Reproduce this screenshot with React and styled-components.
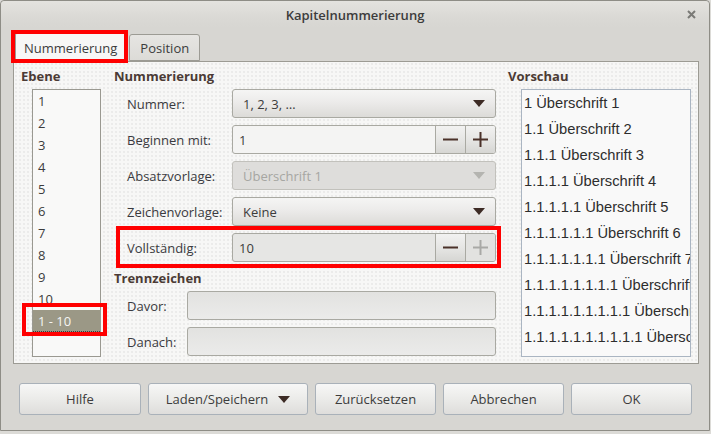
import styled, { createGlobalStyle, css } from "styled-components";

const GlobalStyle = createGlobalStyle`
  html, body {
    margin: 0;
    padding: 0;
    background: #dcdbd7;
  }
  body {
    font-family: "Open Sans", "DejaVu Sans", sans-serif;
    font-size: 13px;
    color: #3c3c3c;
  }
  * { box-sizing: border-box; }
`;

const redMark = css`
  &::after {
    content: "";
    position: absolute;
    border: 4px solid #ff0000;
    pointer-events: none;
  }
`;

const Window = styled.div`
  width: 710px;
  height: 431px;
  border: 1px solid #8e8d86;
  border-radius: 4px 4px 0 0;
  background: #d7d6d2;
  display: flex;
  flex-direction: column;
`;

const TitleBar = styled.div`
  height: 27px;
  display: grid;
  grid-template-columns: 1fr auto 1fr;
  align-items: center;
  background: linear-gradient(#e4e3df, #dad9d5 60%, #d7d6d2);
  border-radius: 4px 4px 0 0;
`;

const Title = styled.div`
  grid-column: 2;
  font-weight: 600;
  font-size: 13px;
  color: #3c3c3c;
`;

const CloseButton = styled.div`
  justify-self: end;
  margin-right: 13px;
  display: flex;
`;

const Body = styled.div`
  flex: 1;
  padding: 0 10px 0 12px;
  display: flex;
  flex-direction: column;
`;

const TabRow = styled.div`
  height: 33px;
  display: flex;
  align-items: flex-end;
  gap: 3px;
  padding-left: 2px;
`;

const Tab = styled.div`
  position: relative;
  height: ${(p) => (p.$active ? "30px" : "27px")};
  margin-bottom: ${(p) => (p.$active ? "-1px" : "0")};
  padding: 0 ${(p) => (p.$active ? 8 : 10)}px;
  display: flex;
  align-items: center;
  border: 1px solid #9c9b94;
  border-bottom: ${(p) => (p.$active ? "none" : "1px solid #9c9b94")};
  border-radius: 3px 3px 0 0;
  background: ${(p) => (p.$active ? "#f7f7f6" : "linear-gradient(#e6e5e2, #dcdbd7)")};
  z-index: ${(p) => (p.$active ? 1 : 0)};
  color: #3c3c3c;
  ${(p) =>
    p.$marked &&
    css`
      ${redMark}
      &::after {
        left: -5px;
        right: -3px;
        top: -3px;
        bottom: -1px;
      }
    `}
`;

const Panel = styled.div`
  height: 303px;
  border: 1px solid #9c9b94;
  background-color: #f7f7f6;
  background-image: radial-gradient(#ebebea 0.7px, transparent 0.8px);
  background-size: 4px 4px;
  padding: 5px 7px 6px 7px;
  display: grid;
  grid-template-columns: 81px 382px 183px;
  column-gap: 12px;
`;

const Column = styled.div`
  display: flex;
  flex-direction: column;
`;

const Heading = styled.div`
  height: 18px;
  line-height: 18px;
  font-weight: 700;
  color: #4b3b35;
  margin-top: ${(p) => p.$top || 0}px;
  margin-bottom: 4px;
`;

const LevelList = styled.div`
  margin-left: 11px;
  width: 69px;
  height: 268px;
  border: 1px solid #9a9991;
  background: #f9f9f8;
`;

const LevelItem = styled.div`
  position: relative;
  height: 22px;
  line-height: 22px;
  padding-left: 5px;
  color: ${(p) => (p.$selected ? "#f5f5f3" : "#3c3c3c")};
  background: ${(p) => (p.$selected ? "#9b9886" : "transparent")};
  border-bottom: ${(p) => (p.$selected ? "1px dotted #3c3c3c" : "none")};
  ${(p) =>
    p.$selected &&
    css`
      ${redMark}
      &::after {
        left: -11px;
        right: -7px;
        top: -7px;
        bottom: -5px;
      }
    `}
`;

const FieldList = styled.div`
  display: flex;
  flex-direction: column;
  gap: 7px;
`;

const FieldRow = styled.div`
  position: relative;
  display: grid;
  grid-template-columns: ${(p) => p.$labelWidth}px 1fr;
  align-items: center;
  padding-left: 13px;
  height: 29px;
  ${(p) =>
    p.$marked &&
    css`
      ${redMark}
      &::after {
        left: 2px;
        right: -5px;
        top: -7px;
        bottom: -6px;
      }
    `}
`;

const Label = styled.div`
  color: #3a3a40;
`;

const controlBase = css`
  height: 29px;
  border: 1px solid #a9a9a2;
  border-radius: 3px;
`;

const Select = styled.div`
  ${controlBase}
  display: flex;
  align-items: center;
  justify-content: space-between;
  padding: 0 10px 0 10px;
  color: ${(p) => (p.$disabled ? "#a6a6a2" : "#3c3c3c")};
  background: ${(p) =>
    p.$disabled
      ? "#dedddb"
      : "linear-gradient(#f5f5f4, #ecebea 45%, #dcdbd8)"};
  border-color: ${(p) => (p.$disabled ? "#c2c1bc" : "#a9a9a2")};
`;

const Spinner = styled.div`
  ${controlBase}
  display: flex;
  overflow: hidden;
  background: ${(p) => (p.$grey ? "#e6e6e4" : "#f4f4f3")};
`;

const SpinValue = styled.div`
  flex: 1;
  display: flex;
  align-items: center;
  padding-left: 6px;
  color: #3c3c3c;
`;

const SpinButton = styled.div`
  width: 30px;
  display: flex;
  align-items: center;
  justify-content: center;
  border-left: 1px solid #a9a9a2;
  background: ${(p) =>
    p.$disabled ? "#e2e2e0" : "linear-gradient(#f2f2f1, #e3e3e1 60%, #d6d6d3)"};
`;

const TextInput = styled.div`
  ${controlBase}
  background: linear-gradient(#e2e2e0, #ebebea);
  border-color: #a9a9a2;
`;

const PreviewBox = styled.div`
  margin-left: 13px;
  width: 170px;
  height: 268px;
  border: 1px solid #aab5c2;
  background: #f9f9f9;
  overflow: hidden;
  padding-left: 2px;
`;

const PreviewLine = styled.div`
  height: 26px;
  line-height: 26px;
  font-family: "Liberation Sans", Arial, sans-serif;
  font-size: 14.7px;
  color: #2d2d2d;
  white-space: nowrap;
`;

const Footer = styled.div`
  display: flex;
  gap: 7px;
  padding: 19px 0 0 6px;
`;

const Button = styled.div`
  width: ${(p) => p.$width || 121}px;
  height: 32px;
  display: flex;
  align-items: center;
  justify-content: center;
  gap: 10px;
  border: 1px solid #a9b1b9;
  border-radius: 3px;
  background: linear-gradient(#f7f7f6, #ebebe9 50%, #dedddb);
  color: #3c3c3c;
`;

function Arrow({ color = "#3d2b25" }) {
  return (
    <svg width="12" height="7" viewBox="0 0 12 7">
      <path d="M0 0 L12 0 L6 7 Z" fill={color} />
    </svg>
  );
}

function Minus({ color = "#4a3129" }) {
  return (
    <svg width="15" height="15" viewBox="0 0 15 15">
      <rect x="0" y="6.5" width="15" height="2" fill={color} />
    </svg>
  );
}

function Plus({ color = "#4a3129" }) {
  return (
    <svg width="15" height="15" viewBox="0 0 15 15">
      <rect x="0" y="6.5" width="15" height="2" fill={color} />
      <rect x="6.5" y="0" width="2" height="15" fill={color} />
    </svg>
  );
}

const levels = ["1", "2", "3", "4", "5", "6", "7", "8", "9", "10", "1 - 10"];

const previews = [
  "1 Überschrift 1",
  "1.1 Überschrift 2",
  "1.1.1 Überschrift 3",
  "1.1.1.1 Überschrift 4",
  "1.1.1.1.1 Überschrift 5",
  "1.1.1.1.1.1 Überschrift 6",
  "1.1.1.1.1.1.1 Überschrift 7",
  "1.1.1.1.1.1.1.1 Überschrift 8",
  "1.1.1.1.1.1.1.1.1 Überschrift 9",
  "1.1.1.1.1.1.1.1.1.1 Überschrift 10",
];

export default function App() {
  return (
    <>
      <GlobalStyle />
      <Window>
        <TitleBar>
          <Title>Kapitelnummerierung</Title>
          <CloseButton>
            <svg width="9" height="9" viewBox="0 0 9 9">
              <path d="M1 1 L8 8 M8 1 L1 8" stroke="#7a7a76" strokeWidth="2" />
            </svg>
          </CloseButton>
        </TitleBar>
        <Body>
          <TabRow>
            <Tab $active $marked>Nummerierung</Tab>
            <Tab>Position</Tab>
          </TabRow>
          <Panel>
            <Column>
              <Heading>Ebene</Heading>
              <LevelList>
                {levels.map((l) => (
                  <LevelItem key={l} $selected={l === "1 - 10"}>
                    {l}
                  </LevelItem>
                ))}
              </LevelList>
            </Column>

            <Column>
              <Heading>Nummerierung</Heading>
              <FieldList>
                <FieldRow $labelWidth={105}>
                  <Label>Nummer:</Label>
                  <Select>
                    1, 2, 3, …
                    <Arrow />
                  </Select>
                </FieldRow>
                <FieldRow $labelWidth={105}>
                  <Label>Beginnen mit:</Label>
                  <Spinner>
                    <SpinValue>1</SpinValue>
                    <SpinButton><Minus /></SpinButton>
                    <SpinButton><Plus /></SpinButton>
                  </Spinner>
                </FieldRow>
                <FieldRow $labelWidth={105}>
                  <Label>Absatzvorlage:</Label>
                  <Select $disabled>
                    Überschrift 1
                    <Arrow color="#b4b4b0" />
                  </Select>
                </FieldRow>
                <FieldRow $labelWidth={105}>
                  <Label>Zeichenvorlage:</Label>
                  <Select>
                    Keine
                    <Arrow />
                  </Select>
                </FieldRow>
                <FieldRow $labelWidth={105} $marked>
                  <Label>Vollständig:</Label>
                  <Spinner $grey>
                    <SpinValue>10</SpinValue>
                    <SpinButton><Minus /></SpinButton>
                    <SpinButton $disabled><Plus color="#a9a9a6" /></SpinButton>
                  </Spinner>
                </FieldRow>
              </FieldList>
              <Heading $top={7}>Trennzeichen</Heading>
              <FieldList>
                <FieldRow $labelWidth={60}>
                  <Label>Davor:</Label>
                  <TextInput />
                </FieldRow>
                <FieldRow $labelWidth={60}>
                  <Label>Danach:</Label>
                  <TextInput />
                </FieldRow>
              </FieldList>
            </Column>

            <Column>
              <Heading>Vorschau</Heading>
              <PreviewBox>
                {previews.map((p) => (
                  <PreviewLine key={p}>{p}</PreviewLine>
                ))}
              </PreviewBox>
            </Column>
          </Panel>
          <Footer>
            <Button $width={122}>Hilfe</Button>
            <Button $width={160}>
              Laden/Speichern
              <Arrow />
            </Button>
            <Button>Zurücksetzen</Button>
            <Button>Abbrechen</Button>
            <Button>OK</Button>
          </Footer>
        </Body>
      </Window>
    </>
  );
}
